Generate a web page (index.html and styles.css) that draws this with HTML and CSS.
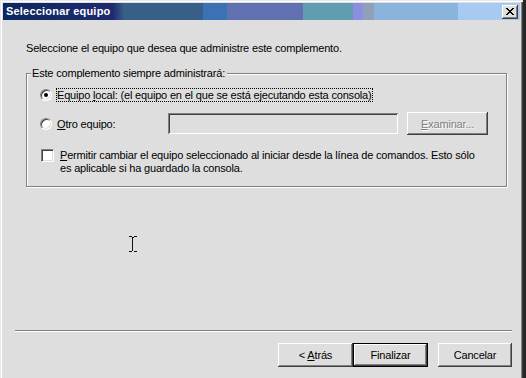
FILE: index.html
```html
<!DOCTYPE html>
<html lang="es">
<head>
    <meta charset="UTF-8">
    <title>Seleccionar equipo</title>
    <link rel="stylesheet" href="styles.css">
</head>
<body>

<div class="window">
    <!-- Title bar -->
    <div class="titlebar">
        <span class="title">Seleccionar equipo</span>
        <button class="close-btn" type="button">
            <svg width="8" height="7" viewBox="0 0 8 7">
                <path d="M0 0h2v1h-2zM6 0h2v1h-2zM1 1h2v1h-2zM5 1h2v1h-2zM2 2h4v1h-4zM3 3h2v1h-2zM2 4h4v1h-4zM1 5h2v1h-2zM5 5h2v1h-2zM0 6h2v1h-2zM6 6h2v1h-2z" fill="#000"/>
            </svg>
        </button>
    </div>

    <div class="content">
        <p class="intro">Seleccione el equipo que desea que administre este complemento.</p>

        <fieldset class="group">
            <legend>Este complemento siempre administrará:</legend>

            <div class="row row-local">
                <span class="radio checked"></span>
                <span class="label focused">Equipo <u>l</u>ocal: (el equipo en el que se está ejecutando esta consola)</span>
            </div>

            <div class="row row-other">
                <span class="radio"></span>
                <span class="label other-label"><u>O</u>tro equipo:</span>
                <span class="textbox"></span>
                <button class="btn btn-browse" type="button" disabled><u>E</u>xaminar...</button>
            </div>

            <div class="row row-check">
                <span class="checkbox"></span>
                <span class="check-text"><u>P</u>ermitir cambiar el equipo seleccionado al iniciar desde la línea de comandos. Esto sólo<br>es aplicable si ha guardado la consola.</span>
            </div>
        </fieldset>
    </div>

    <div class="footer">
        <div class="separator"></div>
        <div class="buttons">
            <button class="btn" type="button">&lt; <u>A</u>trás</button>
            <button class="btn btn-default" type="button">Finalizar</button>
            <button class="btn btn-cancel" type="button">Cancelar</button>
        </div>
    </div>

    <!-- mouse cursor -->
    <svg class="cursor" width="8" height="16" viewBox="0 0 8 16">
        <path d="M0 0h3v1h-3zM5 0h3v1h-3zM3 1h2v1h-2zM0 15h3v1h-3zM5 15h3v1h-3z" fill="#111"/>
        <path d="M3.5 1v14" stroke="#111" stroke-width="1"/>
    </svg>
</div>

</body>
</html>
```

FILE: styles.css
```css
html {
    background: #262626;
}
body {
    margin: 0;
    font-family: 'Liberation Sans', Arial, sans-serif;
    font-size: 11px;
    line-height: 13px;
    color: #000;
    overflow: hidden;
}
.window {
    position: relative;
    width: 523px;
    height: 378px;
    box-sizing: border-box;
    padding: 3px 3px 0 3px;
    background: #dedede;
    display: flex;
    flex-direction: column;
    letter-spacing: -0.18px;
    box-shadow: inset 1px 1px 0 #e8e8e8, inset 2px 2px 0 #fff, inset -1px 0 0 #404040, inset -2px 0 0 #808080;
}
.titlebar {
    height: 17px;
    display: flex;
    align-items: center;
    justify-content: space-between;
    padding-left: 3px;
    letter-spacing: 0.2px;
    background: linear-gradient(to right,
        #0c2760 0px, #1f2b70 110px,
        #375f88 121px, #375f88 200px,
        #3a72b4 200px, #3a72b4 224px,
        #6170b0 224px, #6170b0 300px,
        #5f9db0 300px, #5f9db0 350px,
        #8c8ee0 350px, #8c8ee0 360px,
        #8fa0b8 360px, #8fa0b8 371px,
        #8ab4dc 371px, #8ab4dc 455px,
        #a6caf0 455px);
}
.title {
    color: #fff;
    font-weight: bold;
    font-size: 11px;
}
.close-btn {
    width: 16px;
    height: 14px;
    margin-right: 2px;
    padding: 0;
    border: none;
    background: #dedede;
    display: flex;
    align-items: center;
    justify-content: center;
    box-shadow: inset -1px -1px 0 #404040, inset 1px 1px 0 #fff, inset -2px -2px 0 #808080;
}
.close-btn svg {
    display: block;
    margin: 0 0 1px 0;
}
.content {
    flex: 1;
    padding-left: 23px;
}
.intro {
    margin: 22px 0 12px 0;
}
.group {
    width: 481px;
    box-sizing: border-box;
    margin: 0;
    padding: 7px 0 11px 0;
    border: 1px solid #808080;
    box-shadow: 1px 1px 0 #fff, inset 1px 1px 0 #fff;
}
.group legend {
    margin-left: 4px;
    padding: 0 2px 0 1px;
    background: #dedede;
    line-height: 13px;
}
.row {
    display: flex;
    align-items: center;
}
.row-local {
    height: 16px;
    padding-left: 13px;
    margin-bottom: 9px;
}
.row-other {
    height: 23px;
    padding-left: 13px;
    margin-bottom: 14px;
}
.row-check {
    align-items: flex-start;
    padding-left: 14px;
}
.radio {
    position: relative;
    width: 12px;
    height: 12px;
    box-sizing: border-box;
    border-radius: 50%;
    background: #fff;
    border: 1px solid;
    border-color: #808080 #fff #fff #808080;
    box-shadow: inset 1px 1px 0 #404040, inset -1px -1px 0 #dedede;
    margin-right: 4px;
}
.radio.checked::after {
    content: "";
    position: absolute;
    left: 3px;
    top: 3px;
    width: 4px;
    height: 4px;
    border-radius: 50%;
    background: #000;
}
.label {
    padding: 0 1px;
    height: 14px;
    line-height: 14px;
    box-sizing: border-box;
}
.focused {
    outline: 1px dotted #000;
    outline-offset: -1px;
}
.other-label {
    width: 112px;
}
.textbox {
    width: 230px;
    height: 21px;
    box-sizing: border-box;
    box-shadow: inset 1px 1px 0 #808080, inset -1px -1px 0 #fff, inset 2px 2px 0 #404040, inset -2px -2px 0 #dedede;
    margin-right: 9px;
}
.btn {
    width: 75px;
    height: 24px;
    padding: 0;
    border: none;
    background: #dedede;
    font-family: 'Liberation Sans', Arial, sans-serif;
    font-size: 11px;
    letter-spacing: -0.18px;
    color: #000;
    box-shadow: inset -1px -1px 0 #404040, inset 1px 1px 0 #fff, inset -2px -2px 0 #808080;
}
.btn-browse {
    width: 81px;
    height: 23px;
    color: #808080;
    text-shadow: 1px 1px 0 #fff;
}
.btn-default {
    border: 1px solid #000;
}
.btn-cancel {
    margin-left: 10px;
    width: 74px;
}
.checkbox {
    width: 13px;
    height: 13px;
    box-sizing: border-box;
    background: #fff;
    border: 1px solid;
    border-color: #808080 #fff #fff #808080;
    box-shadow: inset 1px 1px 0 #404040, inset -1px -1px 0 #dedede;
    margin-right: 6px;
}
.check-text {
    line-height: 13px;
}
.footer {
    height: 48px;
}
.separator {
    height: 1px;
    margin: 0 8px 0 12px;
    background: #808080;
    border-bottom: 1px solid #fff;
}
.buttons {
    display: flex;
    justify-content: flex-end;
    padding-right: 8px;
    margin-top: 11px;
}
.cursor {
    position: absolute;
    left: 129px;
    top: 236px;
}
```
